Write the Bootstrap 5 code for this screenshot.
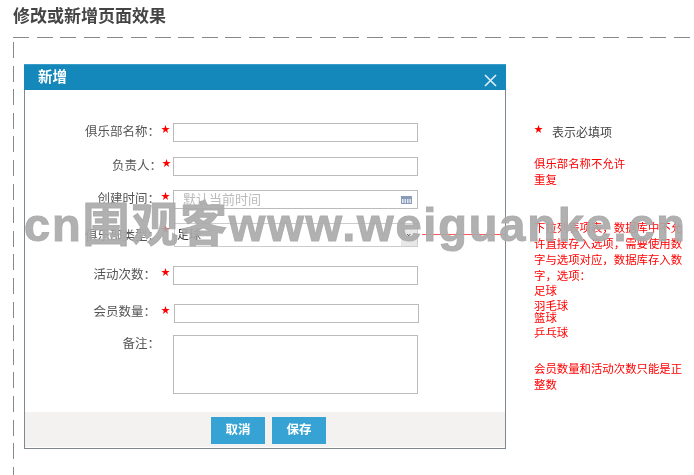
<!DOCTYPE html>
<html lang="zh-CN">
<head>
<meta charset="utf-8">
<title>修改或新增页面效果</title>
<link href="https://cdn.jsdelivr.net/npm/bootstrap@5.3.0/dist/css/bootstrap.min.css" rel="stylesheet">
<style>
html,body{height:475px;overflow:hidden;background:#fff}
body{font-family:"Liberation Sans","Noto Sans CJK SC",sans-serif;font-size:12px;color:#444;position:relative}
.pg-title{margin:0;padding:7px 0 0 13px;height:37px;font-size:17px;font-weight:700;line-height:20px;color:#444}
.dash-top{height:1px;margin-left:13px;background:repeating-linear-gradient(90deg,#888 0 16px,transparent 16px 23.6px)}
.pg-body{margin-left:13px;height:437px;padding:26px 0 0 11px;background:repeating-linear-gradient(180deg,#888 0 16px,transparent 16px 23.6px) left 4px/1px 100% no-repeat}
.dlg{width:482px;height:385px;border:1px solid #7f8890;border-top:0;background:#fff;flex:none}
.dlg-head{height:26px;margin:0 -1px;padding:0 9px 0 14px;background:#1488bb;color:#fff;font-size:14.5px;font-weight:700;border-top:1px solid #3a9cc8}
.dlg-head svg{margin-top:5px}
.dlg-form{height:322px;padding-top:33px}
.frow{height:19px;margin-bottom:15px}
.flabel{width:135px;text-align:right;font-size:12.5px;line-height:19px;color:#555;flex:none}
.fstar{width:13px;padding:1px 0 0 1px;color:#f00;font-size:9px;line-height:10px;flex:none}
.fbox{width:245px;height:19px;border:1px solid #bbb;background:#fff;flex:none;font-size:13px;line-height:17px;padding-left:9px;color:#bbb}
.frow-owner{margin-bottom:14px}
.frow-owner .flabel{width:137px}
.frow-owner .fstar{width:11px;padding-left:0}
.frow-time{margin-bottom:14px}
.frow-sel{height:24px;margin-bottom:19px}
.frow-sel .flabel{padding-top:4px}
.frow-sel .fbox{height:24px;margin-left:1px;padding-left:2px;color:#333;line-height:22px;font-size:12px;border-color:#ccc;width:244px}
.sel-arrow{width:16px;background:#e8e8e8;margin-left:auto;margin-top:4px;font-size:9px;color:#555;text-align:center;line-height:10px}
.frow-next{margin-bottom:19px}
.frow-next .flabel,.frow-shift .flabel{padding-right:4px}
.frow-shift{margin-bottom:12px}
.frow-shift .fbox{margin-left:1px}
.frow-shift .flabel{margin-top:-1px}
.frow-area{height:59px;margin:0}
.frow-area .flabel{padding-top:0}
.frow-area .fbox{height:59px}
.dlg-foot{height:35px;background:#f3f2f1;padding:5px 0 0 186px;gap:7px}
.btn-act{width:54px;height:27px;padding:0;border:0;border-radius:0;background:#36a3d4;color:#fff;font-size:12.500px;font-weight:700;line-height:27px}
.btn-act:hover{background:#36a3d4;color:#fff}
.notes{margin-left:28px;width:150px;padding-top:60px;font-size:11.4px;line-height:16px;color:#f00;flex:none}
.note-req{color:#444;font-size:12px;height:25px;line-height:18px;margin-bottom:7px}
.note-req b{color:#f00;font-size:9px;font-weight:400;width:18px;display:inline-block;line-height:10px;vertical-align:top}
.note-1{height:64px;margin:0}
.note-list{line-height:14px}
.li-up{margin-top:-2px}
.li-dn{margin-top:1px}
.note-3{margin:21px 0 0}
.hline{position:absolute;left:422px;top:234px;width:84px;height:1px;background:#f55}
.wmark{position:absolute;left:24px;top:190px;white-space:nowrap;font-family:"Liberation Sans","Noto Sans CJK SC",sans-serif;font-size:47px;font-weight:700;line-height:70px;color:rgba(170,170,170,.92);letter-spacing:1.8px;-webkit-text-stroke:1px rgba(170,170,170,.92);pointer-events:none}
.cal{position:absolute;right:5px;top:5px}
.blur-wrap{filter:blur(.45px)}
</style>
</head>
<body>
<div class="blur-wrap">
  <h1 class="pg-title">修改或新增页面效果</h1>
  <div class="dash-top"></div>
  <div class="pg-body d-flex align-items-start">
    <div class="dlg">
      <div class="dlg-head d-flex align-items-center justify-content-between">
        <span>新增</span>
        <svg width="13" height="13" viewBox="0 0 13 13" aria-label="关闭"><path d="M1 1l11 11M12 1L1 12" stroke="#d9edf6" stroke-width="1.7" fill="none"/></svg>
      </div>
      <div class="dlg-form">
        <div class="frow d-flex"><div class="flabel">俱乐部名称：</div><div class="fstar">★</div><div class="fbox"></div></div>
        <div class="frow frow-owner d-flex"><div class="flabel">负责人：</div><div class="fstar">★</div><div class="fbox"></div></div>
        <div class="frow frow-time d-flex"><div class="flabel">创建时间：</div><div class="fstar">★</div>
          <div class="fbox position-relative">默认当前时间
            <svg class="cal" width="11" height="8" viewBox="0 0 11 8"><rect width="11" height="8" fill="#8a9bb8"/><rect x="1" y="3" width="9" height="4" fill="#dfe5ee"/><path d="M3 3v4M5.500 3v4M8 3v4" stroke="#8a9bb8"/></svg>
          </div>
        </div>
        <div class="frow frow-sel d-flex"><div class="flabel">俱乐部类型：</div><div class="fstar">★</div><div class="fbox d-flex">足球<span class="sel-arrow">⌄</span></div></div>
        <div class="frow frow-next d-flex"><div class="flabel">活动次数：</div><div class="fstar">★</div><div class="fbox"></div></div>
        <div class="frow frow-shift d-flex"><div class="flabel">会员数量：</div><div class="fstar">★</div><div class="fbox"></div></div>
        <div class="frow frow-area d-flex"><div class="flabel">备注：</div><div class="fstar"></div><div class="fbox"></div></div>
      </div>
      <div class="dlg-foot d-flex">
        <button type="button" class="btn btn-act">取消</button>
        <button type="button" class="btn btn-act">保存</button>
      </div>
    </div>
    <div class="notes">
      <div class="note-req"><b>★</b>表示必填项</div>
      <p class="note-1">俱乐部名称不允许<br>重复</p>
      <div class="note-2">下拉列表项表，数据库中不允许直接存入选项，需要使用数字与选项对应，数据库存入数字，选项：</div>
      <div class="note-list"><div>足球</div><div class="li-dn">羽毛球</div><div class="li-up">篮球</div><div class="li-dn">乒乓球</div></div>
      <p class="note-3">会员数量和活动次数只能是正整数</p>
    </div>
  </div>
  <div class="hline"></div>
  <div class="wmark">cn围观客www.weiguanke.cn</div>
</div>
<script src="https://cdn.jsdelivr.net/npm/bootstrap@5.3.0/dist/js/bootstrap.bundle.min.js"></script>
</body>
</html>
